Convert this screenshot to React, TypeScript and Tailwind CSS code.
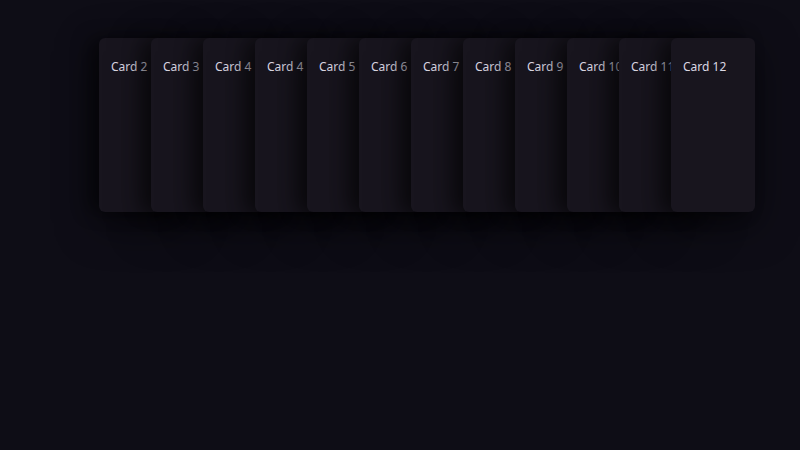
import React from "react";

const labels = ["Card 2", "Card 3", "Card 4", "Card 4", "Card 5", "Card 6", "Card 7", "Card 8", "Card 9", "Card 10", "Card 11", "Card 12"];

export default function App() {
  return (
    <div className="w-[800px] h-[450px] bg-[#0e0d16] overflow-hidden" style={{ fontFamily: '"Noto Sans", "Open Sans", sans-serif' }}>
      <div className="flex pl-[99px] pt-[38px]">
        {labels.map((l, i) => (
          <div
            key={i}
            className={`relative shrink-0 w-[84px] h-[174px] rounded-md bg-[#18151e] overflow-hidden shadow-[-10px_0_18px_rgba(0,0,0,0.45),0_12px_40px_rgba(0,0,0,0.55)] ${i === 0 ? "" : "-ml-[32px]"}`}
          >
            <div className="px-3 pt-[19px] text-[12px] leading-5 text-[#dcd8e4] whitespace-nowrap">{l}</div>
          </div>
        ))}
      </div>
    </div>
  );
}
